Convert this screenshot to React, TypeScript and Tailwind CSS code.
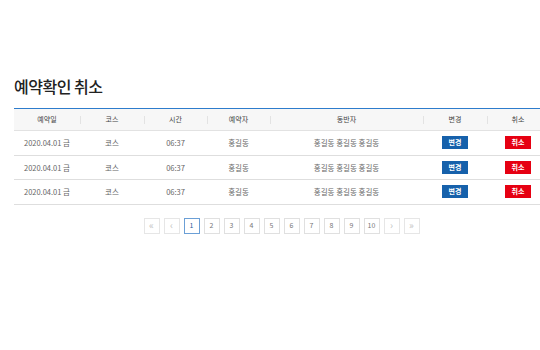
const rows = [1, 2, 3].map((i) => ({
  id: i,
  date: "2020.04.01 금",
  course: "코스",
  time: "06:37",
  booker: "홍길동",
  partners: "홍길동 홍길동 홍길동",
}));

const headers = ["예약일", "코스", "시간", "예약자", "동반자", "변경", "취소"];
const widths = [66, 64, 63, 63, 153, 64, 62];
const pages = ["«", "‹", "1", "2", "3", "4", "5", "6", "7", "8", "9", "10", "›", "»"];

export default function App() {
  return (
    <div className="h-[350px] w-[540px] overflow-hidden bg-white" style={{ fontFamily: '"Noto Sans CJK KR", "Noto Sans", sans-serif' }}>
      <div className="w-[563px] px-[14px] pt-[75px]">
        <h1 className="text-[16px] font-medium leading-[22px] tracking-[-0.5px] text-[#222]">예약확인 취소</h1>

        <table className="mt-[11px] w-full table-fixed border-collapse">
          <colgroup>
            {widths.map((w, i) => (
              <col key={i} style={{ width: w }} />
            ))}
          </colgroup>
          <thead>
            <tr className="h-[22px] border-t border-[#2d7ccc] border-b border-b-[#e2e2e2] bg-[#f7f7f7]">
              {headers.map((h, i) => (
                <th key={h} className="relative p-0 text-center text-[7px] font-normal text-[#444]">
                  {h}
                  {i > 0 && <span className="absolute left-0 top-[7px] h-[8px] w-px bg-[#e3e3e3]" />}
                </th>
              ))}
            </tr>
          </thead>
          <tbody>
            {rows.map((r) => (
              <tr key={r.id} className="h-[24.5px] border-b border-[#dedede] text-center text-[7.5px] text-[#666]">
                <td className="p-0">{r.date}</td>
                <td className="p-0">{r.course}</td>
                <td className="p-0">{r.time}</td>
                <td className="p-0">{r.booker}</td>
                <td className="p-0">{r.partners}</td>
                <td className="p-0">
                  <button type="button" className="h-[13px] w-[26px] bg-[#1661ab] text-[7px] font-bold leading-[13px] text-white">
                    변경
                  </button>
                </td>
                <td className="p-0">
                  <button type="button" className="h-[13px] w-[26px] bg-[#e60012] text-[7px] font-bold leading-[13px] text-white">
                    취소
                  </button>
                </td>
              </tr>
            ))}
          </tbody>
        </table>

        <div className="mt-[13px] flex justify-center gap-[4px]">
          {pages.map((p, i) => {
            const active = p === "1";
            const arrow = i < 2 || i > 11;
            return (
              <span
                key={i}
                className={`flex h-[16px] w-[16px] items-center justify-center border leading-none ${
                  active
                    ? "border-[#6b9fd6] text-[7px] text-[#2a5d9a]"
                    : arrow
                      ? "border-[#e6e6e6] pb-px text-[10px] text-[#c4c4c4]"
                      : "border-[#e0e0e0] text-[7px] text-[#777]"
                }`}
              >
                {p}
              </span>
            );
          })}
        </div>
      </div>
    </div>
  );
}
